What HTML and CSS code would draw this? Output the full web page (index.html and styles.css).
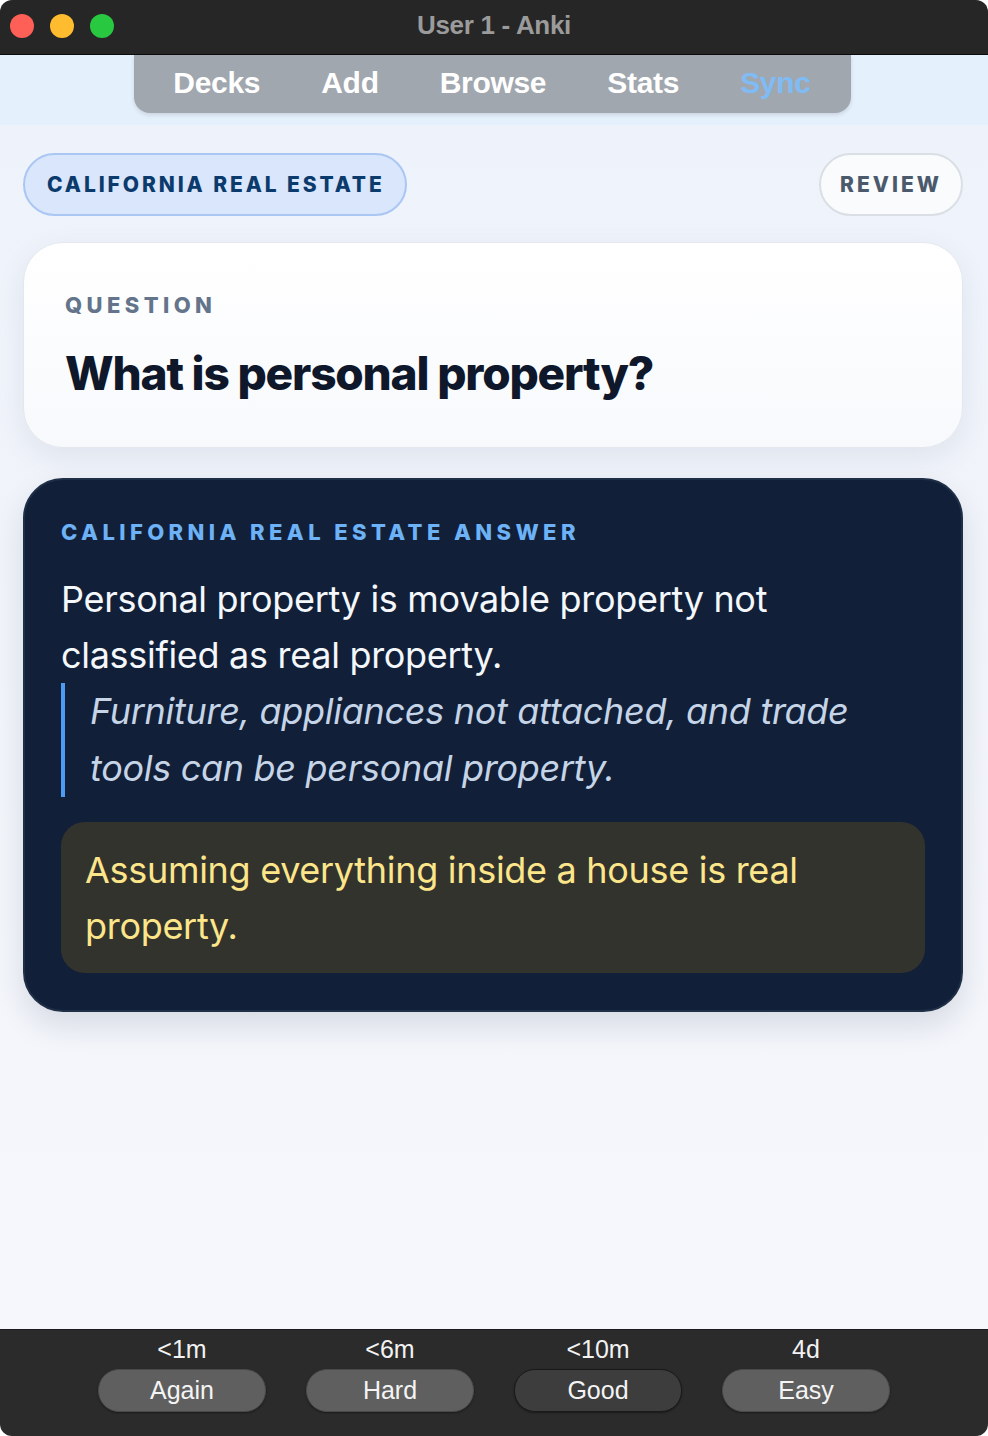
FILE: index.html
```html
<!DOCTYPE html>
<html>
<head>
<meta charset="utf-8">
<link rel="stylesheet" href="styles.css">
</head>
<body>
<div class="window">
  <header class="titlebar">
    <div class="lights">
      <span class="light red"></span>
      <span class="light yellow"></span>
      <span class="light green"></span>
    </div>
    <div class="title">User 1 - Anki</div>
  </header>
  <div class="toolbar">
    <nav class="nav">
      <span class="nav-item">Decks</span>
      <span class="nav-item">Add</span>
      <span class="nav-item">Browse</span>
      <span class="nav-item">Stats</span>
      <span class="nav-item sync">Sync</span>
    </nav>
  </div>
  <main class="content">
    <div class="chips">
      <span class="chip deck">CALIFORNIA REAL ESTATE</span>
      <span class="chip review">REVIEW</span>
    </div>
    <section class="card question">
      <div class="label q-label">QUESTION</div>
      <h1 class="q-text">What is personal property?</h1>
    </section>
    <section class="card answer">
      <div class="label a-label">CALIFORNIA REAL ESTATE ANSWER</div>
      <p class="a-text">Personal property is movable property not classified as real property.</p>
      <blockquote class="example">Furniture, appliances not attached, and trade tools can be personal property.</blockquote>
      <div class="warning">Assuming everything inside a house is real property.</div>
    </section>
  </main>
  <footer class="bottombar">
    <div class="ease">
      <span class="time">&lt;1m</span>
      <button class="btn">Again</button>
    </div>
    <div class="ease">
      <span class="time">&lt;6m</span>
      <button class="btn">Hard</button>
    </div>
    <div class="ease">
      <span class="time">&lt;10m</span>
      <button class="btn default">Good</button>
    </div>
    <div class="ease">
      <span class="time">4d</span>
      <button class="btn">Easy</button>
    </div>
  </footer>
</div>
</body>
</html>
```

FILE: styles.css
```css
html, body {
  margin: 0;
  padding: 0;
  background: #ffffff;
}

.window {
  width: 988px;
  height: 1436px;
  display: flex;
  flex-direction: column;
  border-radius: 12px;
  overflow: hidden;
  font-family: Inter, "Liberation Sans", sans-serif;
}

.titlebar {
  height: 54px;
  flex: none;
  background: #262626;
  border-bottom: 1px solid #0c0c0c;
  display: flex;
  align-items: center;
  position: relative;
}

.lights {
  display: flex;
  gap: 16px;
  padding-left: 10px;
  margin-top: -2px;
}

.light {
  width: 24px;
  height: 24px;
  border-radius: 50%;
  display: block;
}

.red { background: #fe5f57; }
.yellow { background: #febc2e; }
.green { background: #28c840; }

.title {
  position: absolute;
  left: 0;
  right: 0;
  top: 10px;
  text-align: center;
  font-family: "Liberation Sans", Arial, sans-serif;
  font-weight: bold;
  font-size: 26px;
  line-height: 30px;
  color: #9b9b9b;
  letter-spacing: -0.3px;
  pointer-events: none;
}

.toolbar {
  height: 70px;
  flex: none;
  background: #e5f0fd;
  display: flex;
  justify-content: center;
  align-items: flex-start;
}

.nav {
  width: 717px;
  height: 58px;
  margin-left: -4px;
  background: #a1a7ae;
  border-radius: 0 0 16px 16px;
  box-shadow: 0 2px 4px rgba(0, 0, 0, 0.12);
  display: flex;
  align-items: center;
  justify-content: center;
  gap: 61px;
}

.nav-item {
  font-family: "Liberation Sans", Arial, sans-serif;
  font-weight: bold;
  font-size: 30px;
  color: #ffffff;
  letter-spacing: -0.3px;
  margin-top: -2px;
}

.nav-item.sync {
  color: #7fbcf6;
}

.content {
  flex: 1;
  background: linear-gradient(180deg, #eef3fb 0%, #f1f4fa 40%, #f5f7fc 100%);
  padding: 28px 25px 0 23px;
  display: flex;
  flex-direction: column;
}

.chips {
  display: flex;
  justify-content: space-between;
  align-items: center;
}

.chip {
  height: 63px;
  box-sizing: border-box;
  border-radius: 32px;
  display: flex;
  align-items: center;
  font-weight: 800;
  font-size: 21px;
  letter-spacing: 2.9px;
  white-space: nowrap;
}

.chip.deck {
  background: #d9e6fb;
  border: 2px solid #aac7f3;
  color: #0b3a6c;
  padding: 0 22px 0 22px;
  width: 384px;
}

.chip.review {
  background: #fafbfd;
  border: 2px solid #dadfe5;
  color: #4a5a6c;
  padding: 0 20px;
  width: 144px;
  justify-content: center;
  letter-spacing: 3px;
}

.card {
  border-radius: 40px;
  box-sizing: border-box;
}

.question {
  margin-top: 26px;
  height: 206px;
  background: linear-gradient(180deg, #ffffff 0%, #f7f9fc 100%);
  border: 1px solid #e4e8ee;
  box-shadow: 0 10px 30px rgba(30, 50, 90, 0.08);
  padding: 47px 41px 0 41px;
}

.label {
  font-weight: 800;
  font-size: 22px;
  line-height: 30px;
  letter-spacing: 4.4px;
}

.q-label {
  color: #64748b;
}

.q-text {
  margin: 25px 0 0 0;
  font-weight: 800;
  font-size: 46px;
  line-height: 56px;
  letter-spacing: -1.2px;
  color: #0f172a;
}

.answer {
  margin-top: 30px;
  height: 534px;
  background: #112038;
  border: 2px solid #1f2f47;
  box-shadow: 0 14px 30px rgba(20, 30, 60, 0.12);
  padding: 37px 36px 0 36px;
}

.a-label {
  color: #6db2f6;
}

.a-text {
  margin: 24px 0 0 0;
  font-size: 36px;
  line-height: 56px;
  color: #f4f7fb;
  letter-spacing: -0.3px;
}

.example {
  margin: 0;
  border-left: 4px solid #4b9cf2;
  padding: 0 0 0 25px;
  font-style: italic;
  font-size: 36px;
  line-height: 57px;
  color: #c6d4e7;
  letter-spacing: -0.3px;
}

.warning {
  margin-top: 25px;
  background: #33332e;
  border-radius: 24px;
  padding: 20px 24px 19px 24px;
  font-size: 36px;
  line-height: 56px;
  color: #fde68a;
  letter-spacing: -0.3px;
}

.bottombar {
  height: 107px;
  flex: none;
  background: #2b2b2b;
  border-top: 1px solid #1c1c1c;
  display: flex;
  justify-content: center;
  gap: 40px;
  padding-top: 4px;
  box-sizing: border-box;
  font-family: "Liberation Sans", Arial, sans-serif;
}

.ease {
  width: 168px;
  display: flex;
  flex-direction: column;
  align-items: center;
  gap: 5px;
}

.time {
  font-size: 25px;
  line-height: 30px;
  color: #f2f2f2;
}

.btn {
  width: 168px;
  height: 43px;
  border-radius: 21px;
  border: 1px solid #4a4a4a;
  background: #5f5f5f;
  color: #f4f4f4;
  font-family: "Liberation Sans", Arial, sans-serif;
  font-size: 25px;
  padding: 0;
  box-shadow: 0 1px 2px rgba(0, 0, 0, 0.4);
}

.btn.default {
  background: #3d3d3d;
  border: 1px solid #1a1a1a;
}
```
